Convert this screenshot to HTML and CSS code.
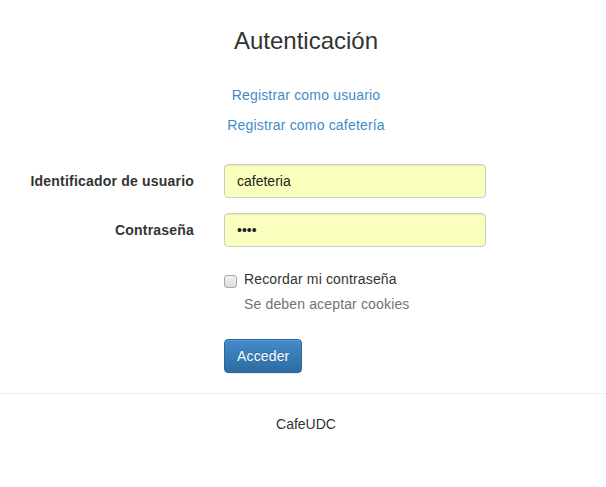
FILE: index.html
```html
<!DOCTYPE html>
<html lang="es">
<head>
<meta charset="utf-8">
<title>Autenticación</title>
<link rel="stylesheet" href="styles.css">
</head>
<body>
<main class="content">
  <h3 class="title">Autenticación</h3>
  <nav class="links">
    <a href="#" class="link">Registrar como usuario</a>
    <a href="#" class="link">Registrar como cafetería</a>
  </nav>
  <form class="login-form">
    <label class="field-label" for="user">Identificador de usuario</label>
    <div class="field"><input id="user" class="input" type="text" value="cafeteria"></div>
    <label class="field-label" for="pass">Contraseña</label>
    <div class="field"><input id="pass" class="input" type="password" value="cafe"></div>
    <div class="field offset checkbox-group">
      <label class="check-label"><input type="checkbox" class="check"><span>Recordar mi contraseña</span></label>
      <span class="help">Se deben aceptar cookies</span>
    </div>
    <div class="field offset">
      <button type="button" class="btn">Acceder</button>
    </div>
  </form>
</main>
<hr class="divider">
<footer class="footer">CafeUDC</footer>
</body>
</html>
```
FILE: styles.css
```css
* { box-sizing: border-box; }
html, body { margin: 0; padding: 0; background: #fff; }
body {
  font-family: "Liberation Sans", Arial, sans-serif;
  font-size: 14px;
  line-height: 20px;
  color: #333;
  letter-spacing: 0.15px;
}
.content { padding-left: 6px; }
.title {
  margin: 28px 0 0;
  font-size: 24px;
  line-height: 26px;
  font-weight: 500;
  text-align: center;
  color: #333;
  letter-spacing: 0;
}
.links {
  display: flex;
  flex-direction: column;
  align-items: center;
  gap: 10px;
  margin-top: 31px;
}
.link { color: #428bca; text-decoration: none; line-height: 20px; letter-spacing: 0.18px; }
.login-form {
  display: grid;
  grid-template-columns: 203px 292px;
  row-gap: 15px;
  margin-top: 29px;
}
.field-label {
  padding: 7px 15px 0 0;
  text-align: right;
  font-weight: bold;
  letter-spacing: 0.2px;
}
.field { padding: 0 15px; }
.offset { grid-column: 2; }
.input {
  display: block;
  width: 100%;
  height: 34px;
  padding: 6px 12px;
  font: inherit;
  color: #222;
  background: #faffbd;
  border: 1px solid #ccc;
  border-radius: 4px;
  box-shadow: inset 0 1px 1px rgba(0,0,0,.075);
  outline: none;
}
.checkbox-group {
  padding-top: 7px;
  display: flex;
  flex-direction: column;
  align-items: flex-start;
}
.check-label { display: flex; align-items: flex-start; }
.check {
  appearance: none;
  -webkit-appearance: none;
  width: 13px;
  height: 13px;
  margin: 6px 7px 0 0;
  border: 1px solid #a8a8a8;
  border-radius: 3px;
  background: linear-gradient(#f2f2f2, #dedede);
}
.help { margin: 5px 0 10px 20px; color: #737373; }
.btn {
  display: inline-block;
  height: 34px;
  padding: 6px 12px;
  font: inherit;
  letter-spacing: 0.15px;
  color: #fff;
  text-shadow: 0 -1px 0 rgba(0,0,0,.2);
  background: linear-gradient(#428bca, #2d6ca2);
  border: 1px solid #2b669a;
  border-radius: 4px;
  box-shadow: inset 0 1px 0 rgba(255,255,255,.15), 0 1px 1px rgba(0,0,0,.075);
  cursor: pointer;
}
.divider {
  margin: 20px 0;
  border: 0;
  border-top: 1px solid #eee;
}
.footer { padding-left: 6px; text-align: center; letter-spacing: 0; }
```
